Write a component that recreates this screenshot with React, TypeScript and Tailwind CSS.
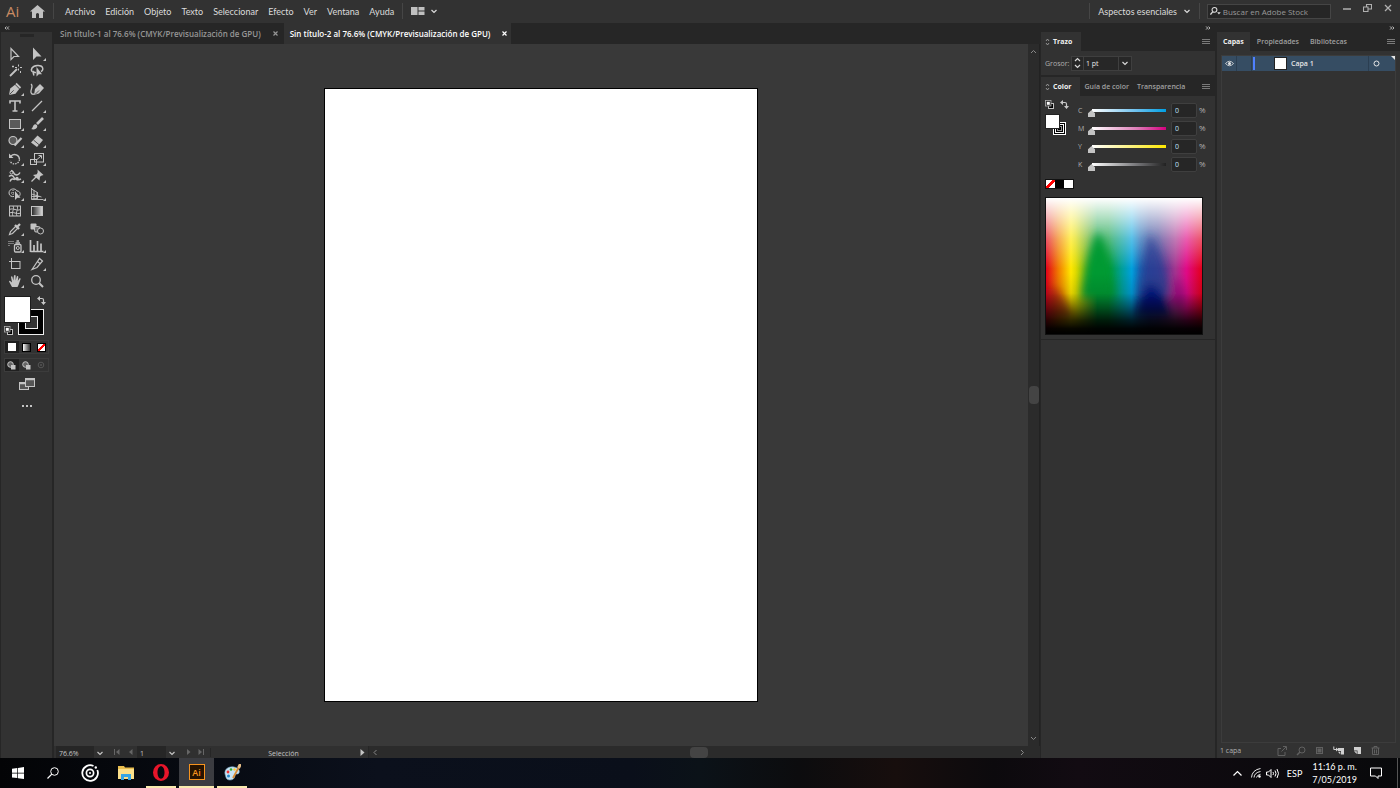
import type { ReactNode } from "react";

function Svg({ c = "size-4", box = "0 0 16 16", children }: { c?: string; box?: string; children: ReactNode }) {
  return (
    <svg viewBox={box} className={c} fill="none" stroke="currentColor" strokeWidth="1" aria-hidden="true">
      {children}
    </svg>
  );
}

const menus = ["Archivo", "Edición", "Objeto", "Texto", "Seleccionar", "Efecto", "Ver", "Ventana", "Ayuda"];

const F = { fill: "currentColor", stroke: "none" };

const tools: { name: string; more?: boolean; icon: ReactNode }[] = [
  { name: "Selección", icon: <path d="M4 2.500v11l3-3h4.500z" strokeWidth="1.200" /> },
  { name: "Selección directa", more: true, icon: <path d="M4 1.500v12.500l3.500-3.500h5z" {...F} /> },
  { name: "Varita mágica", icon: <><path d="M3 13l7-7" strokeWidth="1.800" /><path d="M11.500 1.500v2M11.500 5.500v2M13 4.500h2M8 4.500h2M6 2.500v2M5 3.500h2M13.500 8v2" /></> },
  { name: "Lazo", icon: <><path d="M7 9.500C3 10 1.500 7.500 3 5c2-3 9-3.500 10.500-.5 1 2-.5 3.500-1.500 4M5 8c-1.500 2-.5 3.500 0 4.500" strokeWidth="1.500" /><path d="M7.500 4v9.500l2.300-2.300H13z" {...F} /></> },
  { name: "Pluma", more: true, icon: <><path d="M2 14l1.200-6.500L8 3.800 12.200 8 8.500 12.800z" {...F} /><path d="M9 2.500l4.500 4.500" strokeWidth="1.800" /><path d="M2.500 13.500l4.200-4.200" stroke="#323232" strokeWidth=".8" /></> },
  { name: "Curvatura", icon: <><path d="M5 14l1-6 5-5 4 4-5 5.500z" {...F} /><path d="M6 13.500l4-4" stroke="#323232" strokeWidth=".8" /><path d="M2 3c3 2-1 6 0 8.500.5 1.500 2 2 3.500 1.500" strokeWidth="1.300" /></> },
  { name: "Texto", more: true, icon: <path d="M3 5.500V3h10v2.500M8 3v10M5.500 13h5" strokeWidth="1.600" /> },
  { name: "Segmento de línea", more: true, icon: <path d="M3 13L13 3" strokeWidth="1.200" /> },
  { name: "Rectángulo", more: true, icon: <rect x="2.500" y="3.500" width="11" height="9" fill="#5a5a5a" /> },
  { name: "Pincel", more: true, icon: <><path d="M14 2L8 8" strokeWidth="2.600" /><path d="M2 13c2-.5 1.500-3.500 3.500-4.500 1.500-.6 3.300.8 2.700 2.500C7.500 13 5 14 2 13z" {...F} /></> },
  { name: "Lápiz de forma", more: true, icon: <><circle cx="6" cy="7.500" r="4" fill="#5a5a5a" strokeWidth="1.200" /><path d="M7.500 12.500L14.500 5" strokeWidth="2.200" /></> },
  { name: "Borrador", more: true, icon: <><path d="M2 9.500L8.500 2.500l5.500 4.500-6 7z" {...F} /><path d="M4.500 7l5.500 4.700" stroke="#323232" strokeWidth=".8" /></> },
  { name: "Rotar", more: true, icon: <><path d="M4 5a5 5 0 018.500 3.500" strokeWidth="1.300" /><path d="M12.500 8.500A5 5 0 013 10" strokeDasharray="1.500 1" strokeWidth="1.300" /><path d="M2 2.500V7h4.500z" {...F} /></> },
  { name: "Escala", more: true, icon: <><rect x="1.500" y="8.500" width="6" height="5" /><rect x="5.500" y="2.500" width="9" height="8.500" /><path d="M8 8.500L12 5M9.500 4.500H12.500V7.500" /></> },
  { name: "Anchura", more: true, icon: <><path d="M4 2.500c3 0 2 3 4 4s4 0 5-2M2 8.500c2-2 4-1 5 1s4 3 7 1.500M3 13.500c1-3 3-3 5-2" strokeWidth="1.500" /><circle cx="4.500" cy="4.500" r="1.500" /><circle cx="10" cy="10.500" r="1.700" {...F} /></> },
  { name: "Chincheta", more: true, icon: <><path d="M8.500 1.500l6 5.500-2.300.8-1.200 1-.5 3.700L4 7l3.800-.8.900-2z" {...F} /><path d="M2.500 13.500l4.500-4.500" strokeWidth="1.300" /></> },
  { name: "Creador de formas", more: true, icon: <><path d="M2 7c0-5 7-5 8-2 4 0 4 5 1 6M2 7c0 3 3 4 5 3.500" /><path d="M4 7h5M6 4v6" strokeDasharray="1 1" /><path d="M8 5v9l2.300-2.300h3.200z" {...F} /></> },
  { name: "Cuadrícula de perspectiva", more: true, icon: <path d="M2.500 2v11.500h12M5 4v9M8 6v7M2.500 3l6 3.500v6L2.500 13M2.500 8l10 3M2.500 10.500h8" strokeWidth=".9" /> },
  { name: "Malla", icon: <><rect x="2.500" y="3" width="11" height="10" /><path d="M6 3c2 3-2 6 0 10M10 3c2 3-2 6 0 10M2.500 6.500c4-2 7 2 11 0M2.500 10c4-2 7 2 11 0" /></> },
  { name: "Degradado", icon: <rect x="2.500" y="3.500" width="11" height="9" fill="url(#toolGradient)" /> },
  { name: "Cuentagotas", more: true, icon: <><path d="M2.500 13.500l1-3L9 5l2 2-5.500 5.500z" strokeWidth="1.200" /><path d="M8 4l4 4M10 6l3-3" strokeWidth="2.300" /></> },
  { name: "Fusión", icon: <><rect x="1.500" y="2.500" width="6" height="6" rx="1" {...F} /><rect x="5.500" y="5.500" width="5.500" height="5.500" rx="1.500" fill="#6b6b6b" /><circle cx="11.500" cy="10" r="3" fill="#323232" /></> },
  { name: "Rociar símbolos", more: true, icon: <><rect x="7.500" y="6.500" width="6.500" height="7.500" rx="1" strokeWidth="1.300" /><path d="M8.500 5h4.500M9.500 3h2.500" strokeWidth="1.500" /><circle cx="10.800" cy="10" r="1.500" /><path d="M1.500 3.500h5M1.500 5.500h5M1.500 7.500h2" strokeDasharray="1 1" /></> },
  { name: "Gráfica de columnas", more: true, icon: <path d="M1.500 2v12M1.500 13.500h13M5 7v6M8.500 3v10M12 5.500V13" strokeWidth="1.700" /> },
  { name: "Mesa de trabajo", icon: <><path d="M4.500 2v11M2 5.500h12" strokeDasharray="3 1" /><rect x="4.500" y="5.500" width="8.500" height="7" /></> },
  { name: "Sector", more: true, icon: <path d="M3 13.500L10.500 2.500l3 2.500-5.500 6.500z M3 13.500l5-2M8.500 5.500l3 2.500" strokeWidth="1.200" /> },
  { name: "Mano", more: true, icon: <path d="M5 14L2 8.500c0-1 1-1 1.500-.3L5 9.500 4 4c.2-1 1.300-.8 1.500 0l.8 3.500L7 2.500c.3-.8 1.500-.8 1.600 0v5l1.200-4c.4-.8 1.500-.5 1.500.4L10.800 8l1.500-2.500c.6-.6 1.500-.2 1.300.6L11.500 12 10.500 14z" {...F} /> },
  { name: "Zoom", icon: <><circle cx="7" cy="7" r="4.300" strokeWidth="1.300" /><path d="M10 10l4 4" strokeWidth="1.900" /></> },
];

const sliders = [
  { k: "C", cls: "bg-[linear-gradient(to_right,#fff,#6cc0ee_60%,#009fe3)]" },
  { k: "M", cls: "bg-[linear-gradient(to_right,#fff,#dd7fb8_60%,#d4007f)]" },
  { k: "Y", cls: "bg-[linear-gradient(to_right,#fff,#fbf06c_60%,#ffe900)]" },
  { k: "K", cls: "bg-[linear-gradient(to_right,#fff,#77777a_60%,#222)]" },
];

function Chevron({ c = "size-2" }: { c?: string }) {
  return <Svg c={c} box="0 0 8 8"><path d="M1.500 3L4 5.500 6.500 3" strokeWidth="1.200" /></Svg>;
}

function Burger() {
  return (
    <button aria-label="Menú del panel" className="mr-[5px] ml-auto text-[#909090]">
      <Svg c="h-[7px] w-2" box="0 0 8 7"><path d="M0 1.500h8M0 3.500h8M0 5.500h8" strokeWidth=".8" /></Svg>
    </button>
  );
}

function Collapse({ right = false }: { right?: boolean }) {
  return (
    <Svg c="h-[6px] w-[6px] text-[#c8c8c8]" box="0 0 8 8">
      <path d={right ? "M1.500 2l2 2-2 2M4.500 2l2 2-2 2" : "M3.500 2l-2 2 2 2M6.500 2l-2 2 2 2"} strokeWidth="1.300" />
    </Svg>
  );
}

function Updown() {
  return <Svg c="h-2 w-[5px] text-[#aaa]" box="0 0 5 8"><path d="M1 3l1.500-2L4 3M1 5l1.500 2L4 5" strokeWidth=".8" /></Svg>;
}

function DefaultColors({ c }: { c: string }) {
  return (
    <Svg c={c} box="0 0 9 9">
      <rect x="3.500" y="3.500" width="5" height="5" fill="#000" stroke="#c0c0c0" />
      <rect x=".5" y=".5" width="5.500" height="5.500" fill="#222" stroke="#b0b0b0" strokeWidth=".8" />
      <rect x="1.800" y="1.800" width="3" height="3" fill="#fff" stroke="none" />
    </Svg>
  );
}

function Swap() {
  return <Svg c="size-[9px] text-[#c8c8c8]" box="0 0 9 9"><path d="M2 2.500h3q1.500 0 1.500 1.500v3" strokeWidth="1.200" /><path d="M0 2.500L3 0v5zM6.500 9L4 6h5z" {...F} /></Svg>;
}

function Toolbar() {
  return (
    <aside className="flex w-[54px] shrink-0 flex-col border-r-2 border-l border-[#262626] bg-[#323232] text-[#c4c4c4]">
      <div className="flex h-[9px] shrink-0 items-center bg-[#262626] pl-[3px]"><Collapse /></div>
      <div className="mx-auto mt-[2px] h-[3px] w-[14px] bg-[#262626]" />
      <div className="mt-[8px] grid h-[245px] shrink-0 grid-cols-[22px_22px] grid-rows-14 pl-[3px]">
        {tools.map((t) => (
          <button key={t.name} aria-label={t.name} className="relative flex items-center justify-center">
            <Svg c="size-4">{t.icon}</Svg>
            {t.more && <Svg c="absolute right-0.5 bottom-0.5 size-[3px]" box="0 0 3 3"><path d="M3 0v3H0z" {...F} /></Svg>}
          </button>
        ))}
      </div>
      <div className="relative mt-[6px] ml-[3px] h-[39px] w-10 shrink-0">
        <button aria-label="Trazo" className="absolute right-0 bottom-0 flex size-[26px] items-center justify-center border border-[#eee] bg-black">
          <span className="size-[13px] border border-[#eee] bg-[#323232]" />
        </button>
        <button aria-label="Relleno" className="absolute top-0 left-0 size-[27px] border border-[#1c1c1c] bg-white" />
        <button aria-label="Intercambiar relleno y trazo" className="absolute top-0 -right-0.5"><Swap /></button>
        <button aria-label="Relleno y trazo por defecto" className="absolute bottom-0 left-0"><DefaultColors c="size-[9px]" /></button>
      </div>
      <div className="mx-[3px] mt-[5px] flex h-[14px] shrink-0 items-center gap-px border border-[#3c3c3c]">
        <button aria-label="Color" className="flex h-3 w-[14px] items-center justify-center bg-[#202020]"><span className="size-2 bg-white" /></button>
        <button aria-label="Degradado" className="flex h-3 w-[14px] items-center justify-center"><span className="size-[9px] border border-black bg-linear-to-r from-white to-[#333]" /></button>
        <button aria-label="Ninguno" className="flex h-3 w-[14px] items-center justify-center"><span className="size-[9px] border border-black bg-[linear-gradient(135deg,#fff_36%,#f00_36%,#f00_64%,#fff_64%)]" /></button>
      </div>
      <div className="mx-[3px] mt-[4px] flex h-[14px] shrink-0 items-center gap-px border border-[#3c3c3c]">
        {["Dibujo normal", "Dibujar detrás", "Dibujar dentro"].map((n, i) => (
          <button key={n} aria-label={n} className={["flex h-3 w-[14px] items-center justify-center", i === 0 ? "bg-[#202020]" : "", i === 2 ? "text-[#555]" : ""].join(" ")}>
            <Svg c="size-[9px]" box="0 0 9 9">
              {i < 2 ? <><circle cx="3.500" cy="3.500" r="2.800" fill="#666" /><rect x="4" y="4" width="4.500" height="4.500" {...F} /></> : <><circle cx="4" cy="4" r="2.800" /><circle cx="4" cy="4" r="1" {...F} /></>}
            </Svg>
          </button>
        ))}
      </div>
      <button aria-label="Modo de pantalla" className="mx-auto mt-[6px]">
        <Svg c="h-3 w-4" box="0 0 16 12"><rect x=".5" y="4.500" width="9" height="7" fill="#555" /><rect x="6.500" y=".5" width="9" height="8" fill="#555" /><path d="M1 5.500h5M7 1.500h8" strokeWidth="1.500" /></Svg>
      </button>
      <button aria-label="Editar barra de herramientas" className="mx-auto mt-[14px]">
        <Svg c="h-[4px] w-3" box="0 0 12 4"><path d="M1 1h2v2H1zM5 1h2v2H5zM9 1h2v2H9z" {...F} /></Svg>
      </button>
    </aside>
  );
}

function Spectrum() {
  return (
    <svg viewBox="0 0 156 136" preserveAspectRatio="none" className="h-[138px] w-full border border-[#111]" role="img" aria-label="Espectro CMYK">
      <defs>
        <linearGradient id="hue">
          <stop offset="0" stopColor="#e2001a" /><stop offset=".08" stopColor="#f07c00" /><stop offset=".16" stopColor="#ffe800" />
          <stop offset=".19" stopColor="#dfdb00" /><stop offset=".27" stopColor="#5fae1f" /><stop offset=".33" stopColor="#009a35" /><stop offset=".4" stopColor="#009a3c" />
          <stop offset=".47" stopColor="#009e88" /><stop offset=".55" stopColor="#00a0dd" /><stop offset=".6" stopColor="#1669b4" /><stop offset=".66" stopColor="#233f94" />
          <stop offset=".72" stopColor="#3b388d" /><stop offset=".83" stopColor="#a3358f" /><stop offset=".9" stopColor="#e00a87" /><stop offset="1" stopColor="#e2001a" />
        </linearGradient>
        <linearGradient id="tint" x2="0" y2="1">
          <stop offset="0" stopColor="#fff" /><stop offset=".13" stopColor="#fff" stopOpacity=".72" /><stop offset=".3" stopColor="#fff" stopOpacity=".34" /><stop offset=".52" stopColor="#fff" stopOpacity="0" />
        </linearGradient>
        <linearGradient id="shade" x2="0" y2="1">
          <stop offset=".55" stopColor="#000" stopOpacity="0" /><stop offset=".7" stopColor="#000" stopOpacity=".1" /><stop offset=".8" stopColor="#000" stopOpacity=".45" /><stop offset=".9" stopColor="#000" stopOpacity=".82" /><stop offset=".96" stopColor="#000" stopOpacity=".97" /><stop offset="1" stopColor="#000" />
        </linearGradient>
        <filter id="soft" x="-60%" y="-60%" width="220%" height="220%"><feGaussianBlur stdDeviation="4" /></filter>
      </defs>
      <rect width="156" height="136" fill="url(#hue)" />
      <rect width="156" height="136" fill="url(#tint)" />
      <g filter="url(#soft)">
        <path d="M52 34Q65 52 68 100H36Q42 52 52 34z" fill="#009a33" />
        <path d="M104 36Q118 60 124 98H92Q98 60 104 36z" fill="#263f95" opacity=".7" />
        <path d="M104 86Q120 94 124 118H90Q94 94 104 86z" fill="#00107f" opacity=".9" />
        <path d="M130 76L140 98L132 116L124 102z" fill="#a1007f" opacity=".8" />
        <path d="M0 90L14 92L28 120L0 120z" fill="#900010" opacity=".5" />
      </g>
      <rect width="156" height="136" fill="url(#shade)" />
    </svg>
  );
}

function PanelTab({ active = false, children }: { active?: boolean; children: ReactNode }) {
  return (
    <button role="tab" aria-selected={active} className={active ? "flex h-full items-center gap-[3px] bg-[#323232] px-1 font-bold text-[#f0f0f0]" : "flex h-full items-center px-1 font-semibold text-[#a0a0a0]"}>
      {children}
    </button>
  );
}

function ColorDock() {
  return (
    <aside className="flex w-[174px] shrink-0 flex-col bg-[#262626] text-[7px] text-[#b0b0b0]">
      <div className="flex h-[9px] shrink-0 items-center justify-end pr-1"><Collapse right /></div>
      <section className="bg-[#323232]">
        <div role="tablist" className="flex h-[19px] items-center bg-[#262626]">
          <PanelTab active><Updown />Trazo<span className="w-0.5" /></PanelTab>
          <Burger />
        </div>
        <div className="flex h-6 items-center pl-1">
          <label htmlFor="weight" className="w-[26px]">Grosor:</label>
          <div className="flex h-[15px] items-center border border-[#3f3f3f] bg-[#272727] text-[#d8d8d8]">
            <button aria-label="Cambiar grosor" className="flex h-full w-3 items-center justify-center border-r border-[#3f3f3f]">
              <Svg c="h-3 w-[7px]" box="0 0 7 12"><path d="M1 4l2.500-2.500L6 4M1 8l2.500 2.500L6 8" strokeWidth="1.200" /></Svg>
            </button>
            <input id="weight" defaultValue="1 pt" className="w-[34px] bg-transparent pl-[2px] text-[#e8e8e8] outline-none" />
            <button aria-label="Grosores" className="flex h-full w-[13px] items-center justify-center border-l border-[#3f3f3f]"><Chevron /></button>
          </div>
        </div>
      </section>
      <section className="mt-[2px] bg-[#323232]">
        <div role="tablist" className="flex h-[19px] items-center bg-[#262626]">
          <PanelTab active><Updown />Color<span className="w-0.5" /></PanelTab>
          <PanelTab>Guía de color</PanelTab>
          <PanelTab>Transparencia</PanelTab>
          <Burger />
        </div>
        <div className="flex pt-1 pl-1">
          <div className="relative h-[38px] w-[26px] shrink-0">
            <button aria-label="Trazo" className="absolute top-[22px] left-2 flex size-[13px] items-center justify-center border border-white bg-black"><span className="size-[9px] border border-white p-px"><span className="block size-full border border-[#999]" /></span></button>
            <button aria-label="Relleno" className="absolute top-[14px] left-0 size-[15px] border border-[#222] bg-white" />
            <button aria-label="Colores por defecto" className="absolute top-0 left-0"><DefaultColors c="size-[9px]" /></button>
            <button aria-label="Intercambiar" className="absolute top-0 left-[15px]"><Swap /></button>
          </div>
          <div className="flex flex-1 flex-col gap-[2px] pt-[2px] pl-1">
            {sliders.map((s) => (
              <div key={s.k} className="flex h-4 items-center">
                <label htmlFor={"range" + s.k} className="w-[9px] pl-[3px]">{s.k}</label>
                <input
                  id={"range" + s.k} type="range" min="0" max="100" defaultValue="0"
                  className={s.cls + " ml-[4px] h-3 w-[78px] appearance-none bg-[length:74px_3px] bg-[position:4px_5px] bg-no-repeat [&::-webkit-slider-thumb]:mt-[7px] [&::-webkit-slider-thumb]:size-[7px] [&::-webkit-slider-thumb]:appearance-none [&::-webkit-slider-thumb]:bg-[#c4c4c4] [&::-webkit-slider-thumb]:[clip-path:polygon(50%_0,100%_45%,100%_100%,0_100%,0_45%)]"}
                />
                <input aria-label={"Valor " + s.k} defaultValue="0" className="ml-[5px] h-[15px] w-[26px] rounded-xs border border-[#3f3f3f] bg-[#262626] pl-[3px] text-[#bfe0ff] outline-none" />
                <span className="pl-[2px] text-[8px]">%</span>
              </div>
            ))}
          </div>
        </div>
        <div className="mt-[7px] ml-1 flex h-[10px] w-[29px] border border-[#111]">
          <button aria-label="Ninguno" className="flex-1 bg-[linear-gradient(135deg,#fff_40%,#f00_40%,#f00_60%,#fff_60%)]" />
          <button aria-label="Negro" className="flex-1 bg-black" />
          <button aria-label="Blanco" className="flex-1 bg-white" />
        </div>
        <div className="mt-[8px] mr-3 ml-1 pb-1"><Spectrum /></div>
      </section>
      <div className="mt-px flex-1 bg-[#323232]" />
    </aside>
  );
}

function LayersDock() {
  return (
    <aside className="flex w-[183px] shrink-0 flex-col bg-[#323232] text-[7px] text-[#b0b0b0]">
      <div className="flex h-[9px] shrink-0 items-center justify-end bg-[#262626] pr-[5px]"><Collapse right /></div>
      <div role="tablist" className="flex h-[19px] shrink-0 items-center gap-[3px] bg-[#262626]">
        <PanelTab active><span className="px-0.5">Capas</span></PanelTab>
        <PanelTab>Propiedades</PanelTab>
        <PanelTab>Bibliotecas</PanelTab>
        <Burger />
      </div>
      <div className="mx-1 mt-1 flex flex-1 flex-col border border-[#3c3c3c]">
        <div className="relative flex h-[15px] items-stretch bg-[#364d63] text-[#e6e6e6]">
          <button aria-label="Visibilidad" className="flex w-[14px] items-center justify-center">
            <Svg c="h-[7px] w-[9px]" box="0 0 9 7"><path d="M.5 3.500Q4.500-1 8.500 3.500 4.500 8 .5 3.500z" strokeWidth=".8" /><circle cx="4.500" cy="3.500" r="1.500" {...F} /></Svg>
          </button>
          <span className="w-4 border-x border-[#2b3e51]" />
          <span className="my-px ml-px w-0.5 bg-[#4f80ff]" />
          <span className="my-px ml-[19px] w-[13px] border border-[#222] bg-white" />
          <button className="flex flex-1 items-center pl-[4px] font-semibold">Capa 1</button>
          <button aria-label="Destino" className="flex w-[27px] items-center border-l border-[#2b3e51] pl-1"><Svg c="size-[7px]" box="0 0 7 7"><circle cx="3.500" cy="3.500" r="2.500" /></Svg></button>
          <Svg c="absolute top-0 right-0 size-1" box="0 0 4 4"><path d="M0 0h4v4z" {...F} /></Svg>
        </div>
      </div>
      <div className="flex h-[15px] shrink-0 items-center pr-5 pl-[3px]">
        <span className="flex-1">1 capa</span>
        <div className="flex items-center gap-[9px] text-[#606060]">
          <button aria-label="Exportar"><Svg c="size-[10px]" box="0 0 10 10"><path d="M4 2.500H1v7h7V6M4.500 5.500L9 1M6 .5h3.500V4" /></Svg></button>
          <button aria-label="Localizar"><Svg c="size-[10px]" box="0 0 10 10"><circle cx="6" cy="4" r="3" /><path d="M4 6L1 9" strokeWidth="1.500" /></Svg></button>
          <button aria-label="Máscara"><Svg c="size-[9px]" box="0 0 9 9"><rect x="1.500" y="1.500" width="6" height="6" /><rect x="3" y="3" width="3" height="3" fill="#606060" /></Svg></button>
          <button aria-label="Subcapa" className="text-[#d0d0d0]"><Svg c="h-[9px] w-[11px]" box="0 0 11 9"><path d="M5 2h6v6.500H8V5H5z" {...F} /><path d="M5 5.800L7.300 8.500V5.800z" {...F} /><path d="M.8.500v3h3" /><path d="M3 1.500l2.500 2L3 5.500z" {...F} /></Svg></button>
          <button aria-label="Nueva capa" className="text-[#d0d0d0]"><Svg c="size-[9px]" box="0 0 9 9"><path d="M1 1h7v7H4.500V4.500H1z" {...F} /><path d="M1 5.200L3.800 8V5.200z" {...F} /></Svg></button>
          <button aria-label="Eliminar"><Svg c="size-[9px]" box="0 0 9 9"><path d="M.5 2h8M3 2V.5h3V2M1.500 2v6.500h6V2M3.500 3.500v4M5.500 3.500v4" /></Svg></button>
        </div>
      </div>
    </aside>
  );
}

function Workspace() {
  return (
    <main className="flex min-w-0 flex-1 flex-col">
      <div role="tablist" className="flex h-[21px] shrink-0 items-stretch bg-[#262626] text-[8px] font-semibold text-[#969696]">
        <div className="flex items-center gap-3 pr-1 pl-[6px]">
          <button role="tab" aria-selected="false">Sin título-1 al 76.6% (CMYK/Previsualización de GPU)</button>
          <button aria-label="Cerrar Sin título-1"><Svg c="size-[5px]" box="0 0 5 5"><path d="M.5.5l4 4M4.500.5l-4 4" strokeWidth="1.200" /></Svg></button>
        </div>
        <div className="ml-[2px] flex items-center gap-3 bg-[#323232] pr-1 pl-[6px] text-white">
          <button role="tab" aria-selected="true">Sin título-2 al 76.6% (CMYK/Previsualización de GPU)</button>
          <button aria-label="Cerrar Sin título-2"><Svg c="size-[5px]" box="0 0 5 5"><path d="M.5.5l4 4M4.500.5l-4 4" strokeWidth="1.200" /></Svg></button>
        </div>
      </div>
      <div className="flex min-h-0 flex-1">
        <div className="flex min-w-0 flex-1 items-center justify-center bg-[#393939]">
          <div className="aspect-[435/615] h-[87.500%] border border-black bg-white" />
        </div>
        <div className="flex w-3 shrink-0 flex-col items-center justify-between border-r border-[#222] bg-[#2b2b2b] py-1 text-[#888]">
          <Svg c="size-[7px]" box="0 0 7 7"><path d="M1 5l2.500-2.500L6 5" /></Svg>
          <span className="h-[18px] w-[10px] rounded bg-[#444]" />
          <Svg c="size-[7px]" box="0 0 7 7"><path d="M1 2l2.500 2.500L6 2" /></Svg>
        </div>
      </div>
      <div className="flex h-3 shrink-0 items-center bg-[#303030] text-[7px] text-[#c4c4c4]">
        <input aria-label="Nivel de zoom" defaultValue="76.6%" className="ml-[2px] h-full w-[38px] bg-[#262626] pt-[2px] pl-[3px] outline-none" />
        <button aria-label="Niveles de zoom" className="flex w-3 justify-center pt-px"><Chevron /></button>
        <div className="flex w-[31px] items-center gap-2 pl-2 text-[#666]">
          <button aria-label="Primera"><Svg c="size-[6px]" box="0 0 6 6"><path d="M.5 0v6" /><path d="M5.500 0v6L2 3z" {...F} /></Svg></button>
          <button aria-label="Anterior"><Svg c="size-[6px]" box="0 0 6 6"><path d="M4.500 0v6L1 3z" {...F} /></Svg></button>
        </div>
        <input aria-label="Mesa de trabajo" defaultValue="1" className="h-full w-[29px] bg-[#262626] pt-[2px] pl-[3px] outline-none" />
        <button aria-label="Mesas de trabajo" className="flex w-3 justify-center pt-px"><Chevron /></button>
        <div className="flex w-[32px] items-center gap-1.5 pl-2 text-[#666]">
          <button aria-label="Siguiente"><Svg c="size-[6px]" box="0 0 6 6"><path d="M1 0v6l3.500-3z" {...F} /></Svg></button>
          <button aria-label="Última"><Svg c="size-[6px]" box="0 0 6 6"><path d="M5.500 0v6" /><path d="M.5 0v6L4 3z" {...F} /></Svg></button>
        </div>
        <span className="w-[146px] border-l border-[#262626] pt-[2px] text-center">Selección</span>
        <button aria-label="Mostrar" className="flex w-3 justify-center"><Svg c="size-[7px]" box="0 0 7 7"><path d="M1.500 0v7l4-3.500z" {...F} /></Svg></button>
        <div className="flex h-full flex-1 items-center justify-between border-l border-[#262626] bg-[#2b2b2b] pr-[14px] pl-[3px] text-[#888]">
          <Svg c="size-[7px]" box="0 0 7 7"><path d="M4.500 1L2 3.500 4.500 6" /></Svg>
          <span className="h-[11px] w-[18px] rounded bg-[#444]" />
          <Svg c="size-[7px]" box="0 0 7 7"><path d="M2 1l2.500 2.500L2 6" /></Svg>
        </div>
      </div>
    </main>
  );
}

function Header() {
  return (
    <header className="flex h-[23px] shrink-0 items-center bg-[#323232] pb-px font-['Lato','Open_Sans',sans-serif] text-[9px] text-[#dcdcdc]">
      <span className="w-[30px] pl-[6px] font-['Open_Sans',sans-serif] text-[15px] leading-4 text-[#c98b63]">Ai</span>
      <button aria-label="Inicio"><Svg c="h-[13px] w-[15px] text-[#c0c0c0]" box="0 0 15 13"><path d="M7.500 0L0 6.500h2V13h4V9q1.500-2 3 0v4h4V6.500h2z" {...F} /></Svg></button>
      <span className="mx-2 h-4 w-px bg-[#464646]" />
      <nav className="flex gap-[10px] pl-[3px]">
        {menus.map((m) => <button key={m}>{m}</button>)}
      </nav>
      <span className="ml-2 h-4 w-px bg-[#464646]" />
      <button aria-label="Organizar documentos" className="ml-2 flex items-center gap-[5px]">
        <Svg c="h-2 w-[14px] text-[#c0c0c0]" box="0 0 14 8"><path d="M0 0h6.500v8H0zM7.500 0h6v3.500h-6zM7.500 4.500h6V8h-6z" {...F} /></Svg>
        <Chevron />
      </button>
      <span className="ml-auto h-4 w-px bg-[#464646]" />
      <button className="ml-2 flex items-center gap-[6px]">Aspectos esenciales <Chevron /></button>
      <span className="mr-[7px] ml-2 h-4 w-px bg-[#464646]" />
      <label className="mr-3 flex h-[15px] w-[124px] items-center gap-[2px] border border-[#454545] bg-[#262626] pl-[2px]">
        <Svg c="h-[10px] w-3" box="0 0 12 10"><circle cx="5" cy="3.700" r="2.700" strokeWidth="1.200" /><path d="M3 6L.5 9" strokeWidth="1.500" /><path d="M8 6.500h4L10 9z" {...F} /></Svg>
        <input aria-label="Buscar en Adobe Stock" placeholder="Buscar en Adobe Stock" className="w-full min-w-0 bg-transparent font-['Open_Sans',sans-serif] text-[8px] outline-none placeholder:text-[#999]" />
      </label>
      <div className="mb-[7px] flex items-center gap-3 pr-2 text-[#b0b0b0]">
        <button aria-label="Minimizar"><Svg c="size-2" box="0 0 8 8"><path d="M0 5h8" strokeWidth="1.500" /></Svg></button>
        <button aria-label="Restaurar"><Svg c="h-2 w-[9px]" box="0 0 9 8"><path d="M.5 3h4.500v4.500H.5zM3.500 3V.5h5v4.500H5" strokeWidth="1.100" /></Svg></button>
        <button aria-label="Cerrar"><Svg c="size-2" box="0 0 8 8"><path d="M1 1l6 6M7 1L1 7" strokeWidth="1.300" /></Svg></button>
      </div>
    </header>
  );
}

function Taskbar() {
  return (
    <footer className="flex h-[30px] shrink-0 items-stretch bg-[linear-gradient(to_right,#030406,#0b101c_27%,#0a0f1a_45%,#0b1218_50%,#0c0c0e_57%,#170e0d_64%,#0c0a0d_71%,#120b12_77%,#08090b)] text-white">
      <button aria-label="Inicio" className="flex w-[35px] items-center justify-center"><Svg c="size-3" box="0 0 12 12"><path d="M0 1.700l5.300-.7v4.700H0zM6 .9L12 0v5.700H6zM0 6.400h5.300v4.700L0 10.400zM6 6.400h6V12l-6-.8z" {...F} /></Svg></button>
      <button aria-label="Buscar" className="flex w-9 items-center justify-center"><Svg c="size-3" box="0 0 12 12"><circle cx="7.500" cy="4.500" r="3.800" /><path d="M4.800 7.200L.5 11.500" strokeWidth="1.200" /></Svg></button>
      <button aria-label="Groove" className="flex w-[37px] items-center justify-center"><Svg c="size-[18px]" box="0 0 18 18"><path d="M12.500 2A7.800 7.800 0 1016.300 6" strokeWidth="1.800" /><circle cx="9" cy="9" r="3.600" strokeWidth="1.700" /><circle cx="9" cy="9" r="1" {...F} /><circle cx="14.800" cy="3.500" r="1.200" {...F} /></Svg></button>
      <button aria-label="Explorador" className="flex w-[35px] items-center justify-center"><Svg c="h-[14px] w-4" box="0 0 16 14"><path d="M0 0h6l1 1.500h9V13H0z" fill="#e9bd4e" stroke="none" /><path d="M0 3h16v10H0z" fill="#fbe08a" stroke="none" /><path d="M3 14V8h10v6h-3v-3H6v3z" fill="#35a5e5" stroke="none" /></Svg></button>
      <button aria-label="Opera" className="flex w-[36px] items-center justify-center px-[3px]"><span className="flex h-full w-full items-center justify-center border-b-2 border-[#f8eaae]"><Svg c="h-[17px] w-4" box="0 0 16 17"><path fillRule="evenodd" d="M8 0a8 8.500 0 100 17A8 8.500 0 108 0zm0 2.300c2 0 3.500 2.500 3.500 6.200S10 14.700 8 14.700 4.500 12.200 4.500 8.500 6 2.300 8 2.300z" fill="#e8152a" stroke="none" /></Svg></span></button>
      <button aria-label="Illustrator" className="flex w-[35px] items-center justify-center border-b-2 border-[#f8eaae] bg-[#3b3c41]"><span className="flex size-4 items-center justify-center border border-[#f7931e] bg-[#271300] text-[9px] leading-none font-semibold text-[#f7931e]">Ai</span></button>
      <button aria-label="Paint" className="flex w-[36px] items-center justify-center px-[3px]"><span className="flex h-full w-full items-center justify-center border-b-2 border-[#f8eaae]">
        <Svg c="size-[17px]" box="0 0 17 17"><path d="M1 10C0 5 5 2 10 3c5 1 6 4 5 6-1 2-3 0-4 2 0 2-1 5-5 5s-4-3-5-6z" fill="#c9e4f5" stroke="#76a9c9" strokeWidth=".6" /><circle cx="4" cy="8" r="1.400" fill="#e33" stroke="none" /><circle cx="7" cy="5.500" r="1.300" fill="#3a3" stroke="none" /><circle cx="10.500" cy="5.500" r="1.200" fill="#fc3" stroke="none" /><circle cx="4.500" cy="12" r="1.500" fill="#28c" stroke="none" /><path d="M16 1L9 14" stroke="#d98b35" strokeWidth="1.800" /><path d="M16.500 0l-2 4" stroke="#e9c08a" strokeWidth="3" /></Svg></span></button>
      <div className="ml-auto flex items-center font-['Lato','Open_Sans',sans-serif] text-[9px]">
        <button aria-label="Iconos ocultos" className="mr-[9px]"><Svg c="size-[9px]" box="0 0 9 9"><path d="M.5 6.500l4-4 4 4" strokeWidth="1.200" /></Svg></button>
        <button aria-label="Red" className="mr-[5px]"><Svg c="size-[10px]" box="0 0 10 10"><path d="M.5 9.500Q1 2 9.500.5M3 9.500Q3.500 4.500 9.500 3.500M5.500 9.500Q6 7 9.500 6.300" strokeWidth=".9" /><circle cx="8.500" cy="8.500" r="1.200" {...F} /></Svg></button>
        <button aria-label="Volumen" className="mr-2"><Svg c="h-[11px] w-[13px]" box="0 0 13 11"><path d="M.5 4h2L5 1.500v8L2.500 7h-2zM7 4q1 1.500 0 3M9 2.500q2 3 0 6M11 1q3 4.500 0 9" /></Svg></button>
        <span>ESP</span>
        <div className="ml-[10px] flex flex-col items-center leading-[13px]"><span>11:16 p. m.</span><span>7/05/2019</span></div>
        <button aria-label="Notificaciones" className="mr-[15px] ml-[13px]"><Svg c="size-3" box="0 0 12 12"><path d="M.5 1h11v8H8v2.500L5.500 9H.5z" /></Svg></button>
        <span className="h-full w-[3px] border-l border-[#555]" />
      </div>
    </footer>
  );
}

export default function App() {
  return (
    <div className="flex h-screen min-h-[560px] flex-col overflow-hidden bg-[#262626] font-['Open_Sans','Noto_Sans',sans-serif] leading-none">
      <svg className="absolute size-0" aria-hidden="true">
        <linearGradient id="toolGradient"><stop offset="0" stopColor="#222" /><stop offset="1" stopColor="#ddd" /></linearGradient>
      </svg>
      <Header />
      <div className="flex min-h-0 flex-1">
        <Toolbar />
        <Workspace />
        <div className="flex gap-[2px] pl-px">
          <ColorDock />
          <LayersDock />
        </div>
      </div>
      <Taskbar />
    </div>
  );
}
